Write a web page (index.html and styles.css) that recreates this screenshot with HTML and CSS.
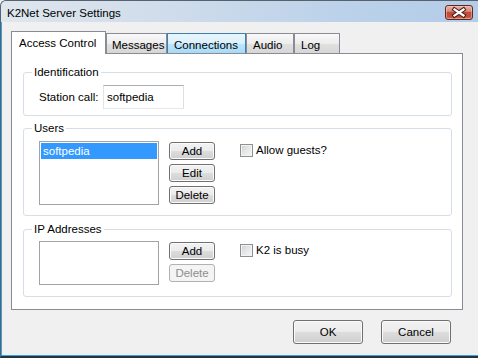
FILE: index.html
```html
<!DOCTYPE html>
<html>
<head>
<meta charset="utf-8">
<title>K2Net Server Settings</title>
<link rel="stylesheet" href="styles.css">
</head>
<body>
<div class="window">
  <div class="titlebar">
    <span class="title">K2Net Server Settings</span>
    <button class="close" aria-label="Close">
      <svg width="26" height="13" viewBox="0 0 26 13">
        <path d="M8.5 3.5 L17.5 9.5 M17.5 3.5 L8.5 9.5" stroke="#4a1d17" stroke-width="4.2" stroke-linecap="square" fill="none"/>
        <path d="M8.5 3.5 L17.5 9.5 M17.5 3.5 L8.5 9.5" stroke="#ffffff" stroke-width="2.2" stroke-linecap="square" fill="none"/>
      </svg>
    </button>
  </div>
  <div class="client">
    <div class="tabs">
      <div class="tab active w-access">Access Control</div>
      <div class="tab w-messages">Messages</div>
      <div class="tab hover w-connections">Connections</div>
      <div class="tab w-audio">Audio</div>
      <div class="tab w-log">Log</div>
    </div>
    <div class="panel">
      <fieldset class="group group-id">
        <legend>Identification</legend>
        <div class="row">
          <span class="label">Station call:</span>
          <div class="textbox">softpedia</div>
        </div>
      </fieldset>
      <fieldset class="group group-users">
        <legend>Users</legend>
        <div class="cols">
          <div class="listbox">
            <div class="item selected">softpedia</div>
          </div>
          <div class="btns">
            <button class="btn">Add</button>
            <button class="btn">Edit</button>
            <button class="btn">Delete</button>
          </div>
          <label class="check"><span class="box"></span><span>Allow guests?</span></label>
        </div>
      </fieldset>
      <fieldset class="group group-ip">
        <legend>IP Addresses</legend>
        <div class="cols">
          <div class="listbox short"></div>
          <div class="btns">
            <button class="btn">Add</button>
            <button class="btn" disabled>Delete</button>
          </div>
          <label class="check"><span class="box"></span><span>K2 is busy</span></label>
        </div>
      </fieldset>
    </div>
    <div class="footer">
      <button class="btn big">OK</button>
      <button class="btn big">Cancel</button>
    </div>
  </div>
</div>
</body>
</html>
```
FILE: styles.css
```css
html, body {
  margin: 0;
  padding: 0;
}
body {
  width: 478px;
  height: 358px;
  overflow: hidden;
  background: #f0f0f0;
  font-family: "Liberation Sans", Arial, sans-serif;
  font-size: 11.5px;
  color: #000;
}
.window {
  box-sizing: border-box;
  width: 478px;
  height: 358px;
  display: flex;
  flex-direction: column;
  background: #3aa2dc;
  border-top: 1px solid #56636f;
  border-left: 1px solid #56636f;
  border-bottom: 2px solid #26323c;
  border-top-left-radius: 6px;
  padding-bottom: 1px;
}
.titlebar {
  height: 21px;
  flex: none;
  display: flex;
  align-items: flex-start;
  justify-content: space-between;
  padding: 0 5px 0 6px;
  background: linear-gradient(90deg, #dfe6ed 0%, #cfdceb 35%, #bcd2ea 70%, #b3cce8 100%);
  border-top-left-radius: 5px;
}
.title {
  font-size: 11.5px;
  line-height: 14px;
  padding-top: 5px;
  color: #000;
}
.close {
  box-sizing: border-box;
  width: 28px;
  height: 15px;
  margin-top: 4px;
  padding: 0;
  border: 1px solid #5e2820;
  border-radius: 3px;
  background: linear-gradient(#eab0a2 0%, #d98c7c 40%, #c4493a 50%, #c0503b 80%, #d0705a 100%);
  box-shadow: inset 0 0 0 1px rgba(255, 220, 210, 0.45);
  display: flex;
  align-items: center;
  justify-content: center;
}
.close svg {
  display: block;
}
.client {
  flex: 1;
  margin-left: 1px;
  background: #f0f0f0;
  padding: 9px 16px 0 9px;
  display: flex;
  flex-direction: column;
}
.tabs {
  display: flex;
  align-items: flex-end;
  height: 22px;
  flex: none;
  position: relative;
  z-index: 1;
}
.tab {
  box-sizing: border-box;
  height: 20px;
  padding: 4px 0 0 5px;
  border: 1px solid #898c95;
  border-bottom: none;
  line-height: 14px;
  white-space: nowrap;
  overflow: hidden;
  background: linear-gradient(#f9f9f9 0%, #ededed 50%, #e1e1e1 51%, #d6d6d6 100%);
}
.tab.hover {
  border-color: #3c7fb1;
  background: linear-gradient(#eaf6fd 0%, #d9f0fc 50%, #bee6fd 51%, #a7d9f5 100%);
  padding-left: 6px;
}
.tab.active {
  height: 23px;
  margin-bottom: -1px;
  background: #fff;
  padding-left: 7px;
}
.w-access { width: 95px; }
.w-messages { width: 61px; }
.w-connections { width: 79px; }
.w-audio { width: 48px; padding-left: 6px; }
.w-log { width: 46px; padding-left: 6px; }
.panel {
  box-sizing: border-box;
  width: 452px;
  height: 257px;
  flex: none;
  border: 1px solid #898c95;
  background: #fff;
  padding: 11px 10px 0 11px;
  display: flex;
  flex-direction: column;
  gap: 5px;
}
.group {
  margin: 0;
  min-width: 0;
  border: 1px solid #d5dfe5;
  border-radius: 3px;
  padding: 6px 10px 10px 8px;
}
.group legend {
  padding: 0 2px;
  line-height: 14px;
}
.group-id {
  padding-bottom: 6px;
}
.group-ip {
  margin-top: 1px;
  padding-top: 5px;
  padding-bottom: 11px;
}
.row {
  display: flex;
  align-items: center;
  margin-left: 7px;
}
.label {
  width: 64px;
  white-space: nowrap;
}
.textbox {
  box-sizing: border-box;
  width: 81px;
  height: 24px;
  border: 1px solid;
  border-color: #abadb3 #dbdfe6 #e3e9ef #e2e3ea;
  padding: 0 0 0 3px;
  line-height: 22px;
  background: #fff;
}
.cols {
  display: flex;
  align-items: flex-start;
  margin-left: 7px;
}
.listbox {
  box-sizing: border-box;
  width: 120px;
  height: 64px;
  border: 1px solid #a3a3a3;
  background: #fff;
  padding: 1px;
}
.listbox.short {
  height: 44px;
}
.item {
  height: 16px;
  line-height: 16px;
  padding-left: 2px;
}
.item.selected {
  background: #3399ff;
  color: #fff;
}
.btns {
  display: flex;
  flex-direction: column;
  gap: 4px;
  margin-left: 10px;
  margin-top: 1px;
}
.btn {
  box-sizing: border-box;
  width: 46px;
  height: 18px;
  padding: 0;
  font: inherit;
  color: #000;
  line-height: 14px;
  border: 1px solid #707070;
  border-radius: 3px;
  background: linear-gradient(#f2f2f2 0%, #ebebeb 50%, #dddddd 51%, #cfcfcf 100%);
  box-shadow: inset 0 0 0 1px #fbfbfb;
}
.btn:disabled {
  color: #8d8d8d;
  border-color: #adb2b5;
  background: #f4f4f4;
  box-shadow: none;
}
.check {
  display: flex;
  align-items: center;
  gap: 3px;
  margin-left: 25px;
  margin-top: 3px;
  line-height: 13px;
  white-space: nowrap;
}
.box {
  box-sizing: border-box;
  width: 13px;
  height: 13px;
  border: 1px solid #8e8f8f;
  background: linear-gradient(135deg, #cdd0d4 0%, #e6e7e9 50%, #f7f7f7 100%);
  box-shadow: inset 0 0 0 1px #f4f4f4;
}
.footer {
  display: flex;
  justify-content: flex-end;
  gap: 18px;
  margin-top: 10px;
  padding-right: 11px;
}
.btn.big {
  width: 70px;
  height: 24px;
}
```
